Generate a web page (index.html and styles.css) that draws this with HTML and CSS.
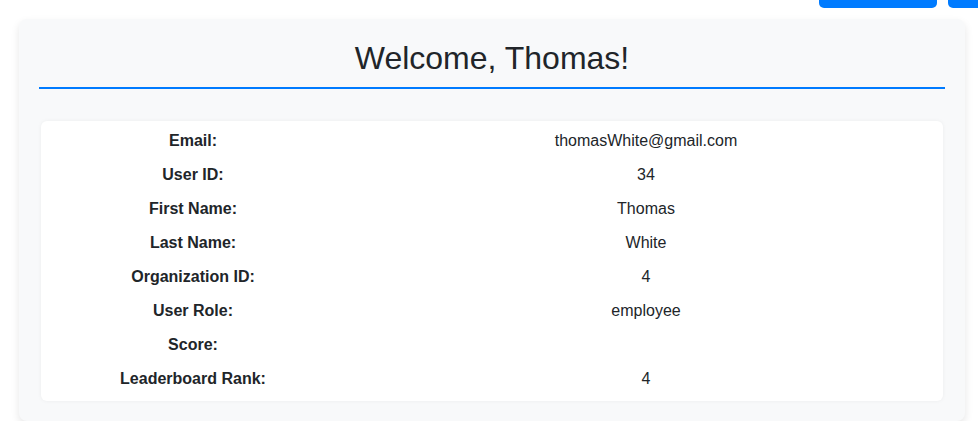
FILE: index.html
```html
<!DOCTYPE html>
<html lang="en">
<head>
<meta charset="utf-8">
<title>Profile</title>
<link rel="stylesheet" href="styles.css">
</head>
<body>
<div class="topbar">
  <button class="btn btn-wide"></button>
  <button class="btn btn-cut"></button>
</div>
<main class="card">
  <h2 class="title">Welcome, Thomas!</h2>
  <div class="info">
    <div class="row"><span class="label">Email:</span><span class="value">thomasWhite@gmail.com</span></div>
    <div class="row"><span class="label">User ID:</span><span class="value">34</span></div>
    <div class="row"><span class="label">First Name:</span><span class="value">Thomas</span></div>
    <div class="row"><span class="label">Last Name:</span><span class="value">White</span></div>
    <div class="row"><span class="label">Organization ID:</span><span class="value">4</span></div>
    <div class="row"><span class="label">User Role:</span><span class="value">employee</span></div>
    <div class="row"><span class="label">Score:</span><span class="value"></span></div>
    <div class="row"><span class="label">Leaderboard Rank:</span><span class="value">4</span></div>
  </div>
</main>
</body>
</html>
```
FILE: styles.css
```css
* { box-sizing: border-box; }
html, body { margin: 0; padding: 0; background: #fff; overflow: hidden; }
body {
  font-family: "Liberation Sans", Arial, sans-serif;
  color: #212529;
  font-size: 16px;
}
.topbar {
  height: 8px;
  overflow: hidden;
  display: flex;
  justify-content: flex-end;
  align-items: flex-end;
  gap: 11px;
}
.btn {
  flex: none;
  height: 38px;
  border: 0;
  padding: 0;
  background: #007bff;
  border-radius: 5px;
}
.btn-wide { width: 118px; }
.btn-cut { width: 40px; margin-right: -10px; }
.card {
  margin: 11px 0 0 19px;
  width: 946px;
  background: #f8f9fa;
  border-radius: 8px;
  box-shadow: 0 4px 8px rgba(0, 0, 0, 0.1);
  padding: 20px;
}
.title {
  margin: 0;
  font-size: 32px;
  font-weight: normal;
  line-height: 38.4px;
  text-align: center;
  padding-bottom: 9.6px;
  border-bottom: 2px solid #007bff;
}
.info {
  margin: 32px 2px 0;
  background: #fff;
  border-radius: 6px;
  box-shadow: 0 0 4px rgba(0, 0, 0, 0.05);
  padding: 3px 0 5px;
}
.row {
  display: grid;
  grid-template-columns: 304px 1fr;
  height: 34px;
  line-height: 34px;
}
.label { font-weight: bold; text-align: center; }
.value { text-align: center; padding-left: 4px; }
```
